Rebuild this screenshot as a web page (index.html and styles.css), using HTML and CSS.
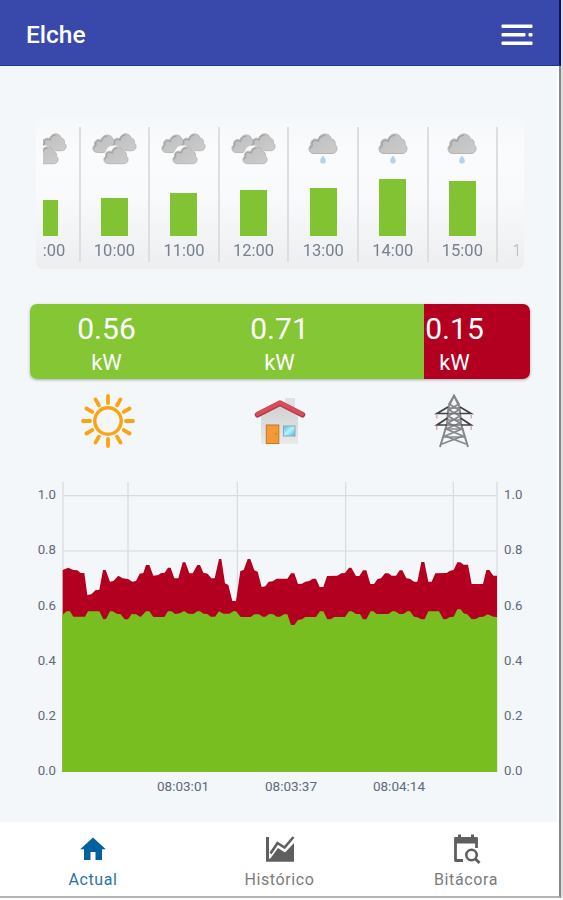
FILE: index.html
```html
<!DOCTYPE html>
<html lang="es">
<head>
  <meta charset="UTF-8" />
  <meta name="viewport" content="width=device-width, initial-scale=1.0"/>
  <title>Elche</title>
  <link rel="stylesheet" href="styles.css">
</head>
<body>
  <!-- Shared weather icons -->
  <svg class="defs" width="0" height="0">
    <defs>
      <linearGradient id="cloudFill" x1="0" y1="0" x2="1" y2="1">
        <stop offset="0" stop-color="#bebebe"/>
        <stop offset="1" stop-color="#cccccc"/>
      </linearGradient>
      <symbol id="cloud" viewBox="0 0 30 22">
        <path d="M6 20.5C2.800 20.500 1 18.400 1 16c0-2 .8-3.200 2-4-.8-3 1.200-6 4.200-6 1 0 1.900.2 2.600.6C11 3 13.600 1 17 1c3.500 0 5.600 2 6.300 5 3 .2 4.500 2.800 3.700 5.600 1.300.9 2 2.300 2 4 0 2.800-2 4.900-5 4.900z" fill="url(#cloudFill)" stroke="#b4b4b4" stroke-width="1"/>
        <path d="M2.200 16c0-1.700.8-2.800 2.200-3.500-1-3 .6-5.200 3-5.200 1.200 0 2 .3 3 1C11.600 4.200 14 2.400 17 2.400" fill="none" stroke="#a0a0a0" stroke-width="1.200"/>
      </symbol>
      <symbol id="clouds" viewBox="0 0 45 32">
        <use href="#cloud" x="0" y="1" width="27" height="20"/>
        <use href="#cloud" x="19" y="0" width="26" height="19"/>
        <path d="M11.500 27C10 23 11 20 14 18.500c1-4 4-6 8-6 5 0 6 2 7 4 5 1 8 5 7 10z" fill="#fafbfc"/>
        <use href="#cloud" x="11" y="13" width="26" height="19"/>
      </symbol>
      <symbol id="rain" viewBox="0 0 30 32">
        <use href="#cloud" x="0" y="0" width="30" height="22"/>
        <path d="M15 22.500c1.600 2.300 2.800 3.500 2.800 5.300a2.800 2.800 0 0 1-5.600 0c0-1.800 1.200-3 2.800-5.300z" fill="#b5d2ec"/>
      </symbol>
    </defs>
  </svg>

  <div class="app">
    <header class="topbar">
      <h1>Elche</h1>
      <svg class="menu-icon" width="32" height="22" viewBox="0 0 32 22" fill="#fff">
        <rect x="0.500" y="0.500" width="31" height="3.600" rx="1"/>
        <rect x="0.500" y="9" width="24" height="3.600" rx="1"/>
        <rect x="27.500" y="9" width="4" height="3.600" rx="1"/>
        <rect x="0.500" y="17.500" width="31" height="3.600" rx="1"/>
      </svg>
    </header>

    <main class="content">
      <section class="forecast">
        <div class="track">
          <div class="hour">
            <svg class="weather" width="45" height="32"><use href="#clouds"/></svg>
            <div class="bar" style="height:36px"></div>
            <span>09:00</span>
          </div>
          <div class="hour">
            <svg class="weather" width="45" height="32"><use href="#clouds"/></svg>
            <div class="bar" style="height:38px"></div>
            <span>10:00</span>
          </div>
          <div class="hour">
            <svg class="weather" width="45" height="32"><use href="#clouds"/></svg>
            <div class="bar" style="height:43px"></div>
            <span>11:00</span>
          </div>
          <div class="hour">
            <svg class="weather" width="45" height="32"><use href="#clouds"/></svg>
            <div class="bar" style="height:46px"></div>
            <span>12:00</span>
          </div>
          <div class="hour">
            <svg class="weather" width="30" height="32"><use href="#rain"/></svg>
            <div class="bar" style="height:48px"></div>
            <span>13:00</span>
          </div>
          <div class="hour">
            <svg class="weather" width="30" height="32"><use href="#rain"/></svg>
            <div class="bar" style="height:57px"></div>
            <span>14:00</span>
          </div>
          <div class="hour">
            <svg class="weather" width="30" height="32"><use href="#rain"/></svg>
            <div class="bar" style="height:55px"></div>
            <span>15:00</span>
          </div>
          <div class="hour last">
            <span>16:00</span>
          </div>
        </div>
      </section>

      <section class="power">
        <div class="green">
          <div class="value solar">0.56<small>kW</small></div>
          <div class="value home">0.71<small>kW</small></div>
        </div>
        <div class="red">
          <div class="value grid">0.15<small>kW</small></div>
        </div>
      </section>

      <section class="sources">
        <svg width="54" height="54" viewBox="-27 -27 54 54" fill="none" stroke="#fca311" stroke-width="3.800" stroke-linecap="round">
          <circle r="13.200" stroke-width="3.400"/>
          <path d="M0-25v7M0 25v-7M-25 0h7M25 0h-7M-12.500-21.600l3.400 5.900M12.500-21.600l-3.400 5.900M-12.500 21.600l3.400-5.900M12.500 21.600l-3.400-5.900M-21.600-12.500l5.900 3.400M21.600-12.500l-5.900 3.400M-21.600 12.500l5.900-3.400M21.600 12.500l-5.900-3.400"/>
        </svg>
        <svg class="house" width="52" height="54" viewBox="0 0 52 54">
          <defs>
            <linearGradient id="wall" x1="0" y1="0" x2="0" y2="1">
              <stop offset="0" stop-color="#cfd1d3"/>
              <stop offset="1" stop-color="#e9e9ea"/>
            </linearGradient>
            <linearGradient id="glass" x1="0" y1="0" x2="1" y2="1">
              <stop offset="0" stop-color="#55bde4"/>
              <stop offset=".5" stop-color="#b5f2fd"/>
              <stop offset="1" stop-color="#48b8e6"/>
            </linearGradient>
          </defs>
          <path d="M31 4h10v18l-10-5z" fill="#dfe1e3"/>
          <path d="M7 22L26 12l18 10v28H7z" fill="url(#wall)"/>
          <path d="M3.500 20.800L26 9.300l22.500 11.500" fill="none" stroke="#b03a47" stroke-width="5.500" stroke-linecap="round" stroke-linejoin="round"/>
          <path d="M3.500 20L26 8.600l22 11.400" fill="none" stroke="#d94c58" stroke-width="4" stroke-linecap="round" stroke-linejoin="round"/>
          <rect x="12.300" y="31" width="12.500" height="18.500" fill="#f29a35" stroke="#c47726"/>
          <circle cx="22" cy="40" r=".8" fill="#b96c20"/>
          <rect x="29.500" y="32" width="11.500" height="10" fill="url(#glass)" stroke="#8caab8"/>
        </svg>
        <svg width="40" height="54" viewBox="0 0 40 54" fill="none" stroke="#858789" stroke-width="2">
          <path d="M6 53l7-23 1.500-17L20 1.500 25.500 13 27 30l7 23"/>
          <path d="M20 2l5 8-10 6 11 6-12 7 14 6-17 7 21 8M20 2l-5 8 10 6-11 6 12 7-14 6 17 7-21 8" stroke-width="1.700"/>
          <path d="M14 14h12M13.500 26h13M12 35h16M9 43h22" stroke-width="1.600"/>
          <path d="M14 19.500h12M13.500 31h13" stroke="#707274" stroke-width="1.500"/>
          <path d="M14 13L3 19.500h11M26 13l11 6.500H26M13.500 24L3 31h10M26.500 24L37 31H27" stroke="#404244" stroke-width="1.700"/>
          <path d="M2.800 20.500v4M37.200 20.500v4M2.800 32v4M37.200 32v4" stroke="#e99aa4" stroke-width="1.300"/>
        </svg>
      </section>

      <section class="chart">
        <div class="axis">
          <span>1.0</span><span>0.8</span><span>0.6</span><span>0.4</span><span>0.2</span><span>0.0</span>
        </div>
        <div class="plot">
          <!-- three units per pixel, zero line at y=891 -->
          <svg width="436" height="290" viewBox="126 21 1308 870">
            <path d="M128 62H1431M128 228H1431M129 21V891M324 21V891M652 21V891M977 21V891M1300 21V891M1431 21V891" fill="none" stroke="#d8dadc" stroke-width="3.500"/>
            <polygon fill="#b30021" points="128,891 128,285 145,278 160,285 172,286 182,294 193,294 202,360 214,358 226,346 238,344 249,285 257,285 270,320 280,318 295,302 308,310 324,312 337,320 348,318 359,296 370,294 378,270 388,270 400,302 415,300 422,295 434,293 444,278 452,278 463,310 475,310 488,262 496,262 508,295 518,295 532,270 540,270 550,293 563,296 574,310 584,310 597,252 604,252 615,325 625,330 637,378 648,378 661,288 671,285 683,252 691,252 703,286 713,290 725,336 736,334 746,320 758,319 770,311 802,311 813,295 823,295 834,327 846,326 856,320 868,318 878,311 888,311 899,336 910,336 921,303 952,302 964,295 975,294 987,278 994,278 1008,303 1018,303 1029,286 1039,286 1051,327 1062,327 1073,312 1083,310 1095,295 1105,295 1115,302 1128,302 1139,286 1147,286 1159,310 1170,311 1182,320 1192,320 1204,261 1213,261 1225,320 1235,320 1246,295 1280,294 1290,287 1301,285 1312,262 1321,262 1331,269 1344,269 1355,327 1389,327 1399,285 1408,285 1420,302 1431,302 1431,891"/>
            <polygon fill="#78be21" points="127,891 127,420 140,409 150,409 160,425 195,425 204,409 238,409 250,433 258,432 270,409 278,409 290,416 302,418 314,433 324,433 335,417 348,418 362,426 378,409 388,409 400,426 433,426 444,409 455,409 465,417 480,415 492,408 505,416 520,417 532,409 540,409 550,416 562,417 572,425 585,425 597,409 610,416 628,416 640,409 648,409 662,426 692,426 703,418 717,418 728,425 736,425 748,417 760,418 770,425 780,425 792,418 802,418 813,450 823,450 834,435 846,433 856,426 888,426 900,409 910,409 922,433 932,433 943,426 975,426 987,409 995,409 1008,417 1020,417 1029,433 1039,433 1052,409 1060,409 1070,417 1105,417 1117,409 1125,409 1138,417 1150,417 1162,409 1170,409 1182,425 1192,427 1204,433 1214,433 1225,409 1257,409 1270,433 1280,432 1288,427 1301,425 1312,403 1322,403 1331,415 1342,418 1355,433 1367,432 1378,426 1390,425 1403,418 1420,425 1431,426 1431,891"/>
          </svg>
          <div class="times">
            <span>08:03:01</span><span>08:03:37</span><span>08:04:14</span>
          </div>
        </div>
        <div class="axis right">
          <span>1.0</span><span>0.8</span><span>0.6</span><span>0.4</span><span>0.2</span><span>0.0</span>
        </div>
      </section>
    </main>

    <nav class="tabs">
      <a class="tab active">
        <svg width="30" height="30" viewBox="0 0 30 30" fill="#01629f"><path d="M15 3.500L2.200 15.200H6V26h6.500v-8h5v8H24V15.200h3.800z"/></svg>
        <span>Actual</span>
      </a>
      <a class="tab">
        <svg width="30" height="30" viewBox="0 0 30 30" fill="none" stroke="#5f5f5f">
          <path d="M2.500 3v23.200H29" stroke-width="3"/>
          <path d="M5.500 19.500l7-10.500 7 4.500L28.500 3" stroke-width="2.600"/>
          <path d="M5 25l8-11 7 4.500 9-9.500v16H5z" fill="#5f5f5f" stroke="none"/>
        </svg>
        <span>Histórico</span>
      </a>
      <a class="tab">
        <svg width="30" height="30" viewBox="0 0 30 30" fill="none" stroke="#5f5f5f">
          <path d="M12 26.500H4.500V5h21v9" stroke-width="2.800" stroke-linejoin="round"/>
          <path d="M3.500 3h23v6.500h-23zM7 .5h3v4H7zM20 .5h3v4h-3z" fill="#5f5f5f" stroke="none"/>
          <circle cx="20.500" cy="21" r="5.200" stroke-width="2.600"/>
          <path d="M24 24.500l4.500 4.500" stroke-width="2.800"/>
        </svg>
        <span>Bitácora</span>
      </a>
    </nav>
  </div>
</body>
</html>
```
FILE: styles.css
```css
body {
  margin: 0;
  font-family: Roboto, "Liberation Sans", sans-serif;
  background: #fff;
  width: 563px;
  height: 900px;
  overflow: hidden;
}

svg {
  display: block;
  flex-shrink: 0;
}

.defs {
  position: absolute;
}

.app {
  box-sizing: border-box;
  width: 561px;
  height: 898px;
  display: flex;
  flex-direction: column;
  border-right: 2px solid #858789;
  border-bottom: 2px solid #b4b4b4;
  box-shadow: 2px 0 0 #dedede;
}

.topbar {
  box-sizing: border-box;
  width: 561px;
  height: 66px;
  flex-shrink: 0;
  display: flex;
  align-items: center;
  justify-content: space-between;
  padding: 4px 26px 0 26px;
  background: #3848ab;
  border-right: 2px solid #10107c;
  border-bottom: 1px solid #21349b;
}

.topbar h1 {
  margin: 0;
  padding-top: 1px;
  color: #fff;
  font-size: 24.500px;
  line-height: 30px;
  font-weight: 500;
}

.content {
  height: 756px;
  flex-shrink: 0;
  background: #f3f7f9;
  margin-right: 2px;
}

.content::before {
  content: "";
  display: block;
  height: 51px;
}

/* hourly forecast */
.forecast {
  box-sizing: border-box;
  width: 488px;
  height: 152px;
  margin-left: 36px;
  padding: 10px 6px 7px 7px;
  border-radius: 7px;
  background: linear-gradient(#f5f8fa, #fafbfc 25%, #f8f9fb 55%, #eceef0);
}

.track {
  display: flex;
  overflow: hidden;
  height: 135px;
  width: 475px;
  -webkit-mask-image: linear-gradient(90deg, #000 96%, rgba(0, 0, 0, 0.4));
  mask-image: linear-gradient(90deg, #000 96%, rgba(0, 0, 0, 0.4));
}

.hour {
  box-sizing: border-box;
  width: 69.600px;
  flex-shrink: 0;
  display: flex;
  flex-direction: column;
  align-items: center;
  justify-content: flex-end;
  border-right: 2px solid #dcdee0;
}

.hour:first-child {
  margin-left: -32px;
}

.hour.last {
  border-right: none;
}

.weather {
  margin-top: 6px;
  margin-bottom: auto;
}

.bar {
  width: 27px;
  flex-shrink: 0;
  background: #82c334;
}

.hour span {
  font-size: 16.500px;
  line-height: 20px;
  padding: 5px 0 1px;
  color: #77818d;
}

/* power balance */
.power {
  display: flex;
  width: 500px;
  height: 75px;
  margin: 35px 0 0 30px;
  border-radius: 7px;
  overflow: hidden;
  color: #fff;
  box-shadow: 0 1px 3px rgba(0, 0, 0, 0.3);
}

.green {
  width: 394px;
  display: flex;
  background: #84c634;
}

.red {
  flex: 1;
  background: #b30021;
}

.value {
  padding-top: 7px;
  font-size: 30px;
  line-height: 36px;
  text-align: center;
}

.value small {
  display: block;
  font-size: 22px;
  line-height: 32px;
}

.solar {
  width: 153px;
}

.home {
  width: 193px;
}

.grid {
  width: 61px;
}

.sources {
  display: flex;
  justify-content: space-between;
  align-items: center;
  padding: 15px 83px 0 81px;
}

.house {
  margin-right: 10px;
}

/* live chart */
.chart {
  display: flex;
  margin: 34px 0 0 30px;
  height: 320px;
}

.axis {
  width: 26px;
  margin-right: 6px;
  padding-top: 3px;
  display: flex;
  flex-direction: column;
  gap: 35.300px;
  text-align: right;
}

.axis span,
.times span {
  font-size: 13.200px;
  line-height: 20px;
  color: #606978;
}

.axis.right {
  margin: 0 0 0 6px;
  text-align: left;
}

.plot {
  width: 436px;
}

.times {
  display: flex;
  justify-content: space-between;
  padding: 4px 73px 0 95px;
}

.times span {
  font-size: 13.500px;
}

.tabs {
  display: flex;
  flex: 1;
  justify-content: space-between;
  background: #fff;
}

.tab {
  width: 186px;
  display: flex;
  flex-direction: column;
  align-items: center;
  padding-top: 12px;
  color: #7c7c7c;
}

.tab span {
  margin-top: 6px;
  font-size: 16px;
  line-height: 20px;
  letter-spacing: 0.600px;
}

.tab.active {
  color: #2c72a5;
}
```
